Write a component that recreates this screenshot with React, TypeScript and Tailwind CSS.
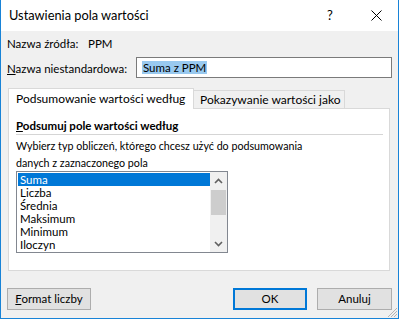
import React from "react";

const items = ["Suma", "Liczba", "Średnia", "Maksimum", "Minimum", "Iloczyn"];

function Chevron({ down }: { down?: boolean }) {
  return (
    <svg width="9" height="6" viewBox="0 0 9 6" className="block">
      <path
        d={down ? "M1 1 L4.5 4.5 L8 1" : "M1 5 L4.5 1.5 L8 5"}
        fill="none"
        stroke="#606060"
        strokeWidth="1.6"
      />
    </svg>
  );
}

function Button({ children, primary, w }: { children: React.ReactNode; primary?: boolean; w: string }) {
  return (
    <div
      className={`${w} h-[22px] flex items-center justify-center bg-[#e1e1e1] ${
        primary ? "border-2 border-[#0078d7]" : "border border-[#adadad]"
      }`}
    >
      {children}
    </div>
  );
}

export default function App() {
  return (
    <div className="relative w-[399px] h-[319px] flex flex-col bg-[#f0f0f0] border-x border-b border-[#1883d7] font-['Lato',sans-serif] text-[11.5px] text-black">
      {/* title bar */}
      <div className="h-[31px] shrink-0 bg-white flex items-center pl-[8px]">
        <span className="flex-1 text-[12.8px]">Ustawienia pola wartości</span>
        <span className="text-[13px] w-[10px] mr-[34px]">?</span>
        <svg width="11" height="11" viewBox="0 0 11 11" className="mr-[16px]">
          <path d="M0.5 0.5 L10.5 10.5 M10.5 0.5 L0.5 10.5" stroke="#000" strokeWidth="1" />
        </svg>
      </div>

      <div className="flex flex-col pl-[6px] pr-[6px]">
        <div className="mt-[5px] h-[16px] flex items-center">
          <span className="w-[81px]">Nazwa źródła:</span>
          <span>PPM</span>
        </div>

        <div className="mt-[5px] h-[21px] flex items-center">
          <span className="w-[129px] pt-[3px]">
            <span className="underline">N</span>azwa niestandardowa:
          </span>
          <div className="w-[256px] h-[21px] border border-[#7a7a7a] bg-white flex items-center pl-[5px]">
            <span className="bg-[#99c9ef] leading-[13px] px-px">Suma z PPM</span>
          </div>
        </div>

        {/* tabs */}
        <div className="mt-[10px] h-[20px] flex items-end ml-px text-[12px]">
          <div className="relative z-10 -mb-px h-[21px] w-[186px] bg-white border-t border-x border-[#d9d9d9] flex items-center pl-[7px]">
            Podsumowanie wartości według
          </div>
          <div className="h-[18px] w-[151px] bg-[#f0f0f0] border-t border-r border-[#d9d9d9] flex items-center pl-[6px]">
            Pokazywanie wartości jako
          </div>
        </div>

        <div className="ml-px w-[382px] h-[163px] border border-[#d9d9d9] bg-white flex flex-col pl-[7px]">
          <div className="mt-[8px] h-[18px] w-[367px] border-b border-[#d5d5d5] font-bold flex items-center">
            <span>
              <span className="underline">P</span>odsumuj pole wartości według
            </span>
          </div>
          <div className="mt-[2px] leading-[17px] text-[10.7px]">
            Wybierz typ obliczeń, którego chcesz użyć do podsumowania
            <br />
            danych z zaznaczonego pola
          </div>
          <div className="w-[212px] h-[82px] border border-[#828790] flex">
            <div className="flex-1 pl-px pt-px">
              {items.map((it, i) => (
                <div
                  key={it}
                  className={`h-[13px] leading-[13px] pl-[2px] ${i === 0 ? "bg-[#0078d7] text-white" : ""}`}
                >
                  {it}
                </div>
              ))}
            </div>
            <div className="w-[17px] bg-[#f0f0f0] flex flex-col">
              <div className="h-[17px] flex items-center justify-center">
                <Chevron />
              </div>
              <div className="mt-px mx-px h-[25px] bg-[#cdcdcd]" />
              <div className="flex-1" />
              <div className="h-[17px] flex items-center justify-center">
                <Chevron down />
              </div>
            </div>
          </div>
        </div>

        <div className="mt-[17px] flex items-center">
          <Button w="w-[84px]">
            <span>
              <span className="underline">F</span>ormat liczby
            </span>
          </Button>
          <div className="flex-1" />
          <Button w="w-[74px]" primary>
            OK
          </Button>
          <div className="w-[10px]" />
          <Button w="w-[75px]">Anuluj</Button>
        </div>
      </div>

      <svg width="10" height="10" viewBox="0 0 10 10" className="absolute right-0 bottom-0">
        <path d="M9 3 L3 9 M9 6 L6 9 M9 0 L0 9" stroke="#b4b4b4" strokeWidth="1" />
      </svg>
    </div>
  );
}
